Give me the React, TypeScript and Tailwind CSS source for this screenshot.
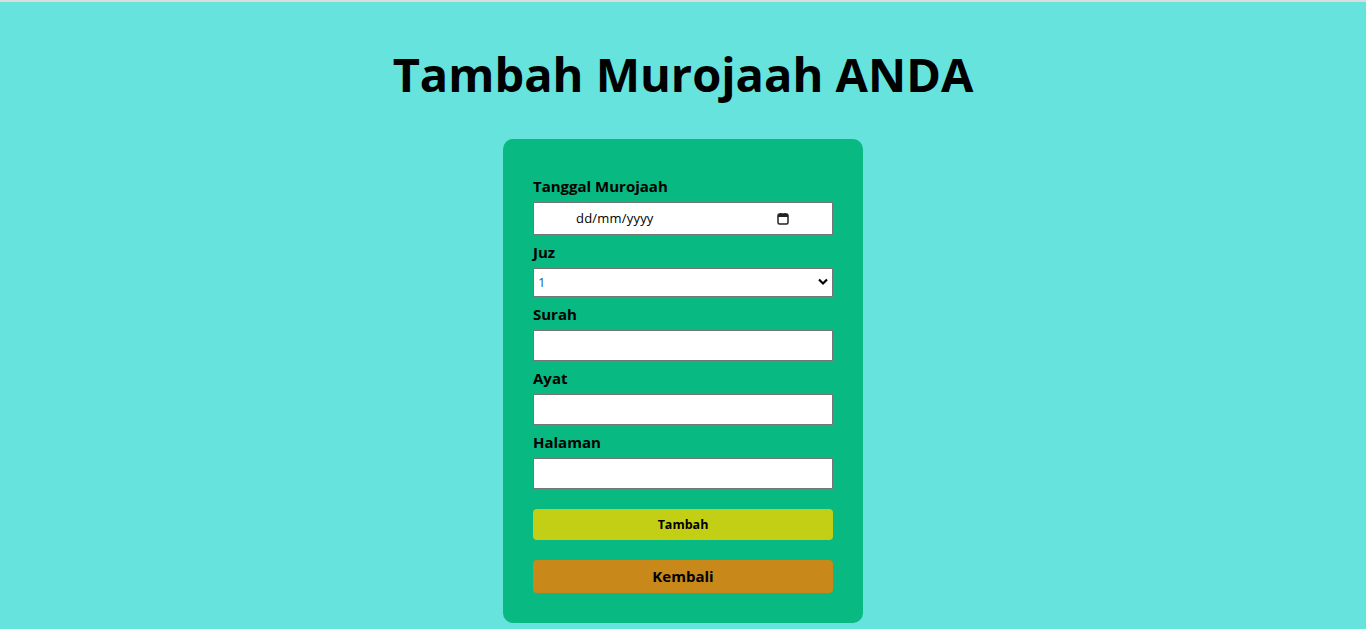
import React from "react";

export default function App() {
  const label = "block text-[15px] font-bold leading-[21px] text-black";
  const input =
    "block w-full border border-[#767676] bg-white text-center text-[13px] text-black outline-none";
  return (
    <div
      className="min-h-[629px] w-full border-t-2 border-[#dcdcdc] bg-[#66e3dd]"
      style={{ fontFamily: '"Open Sans", "Noto Sans", sans-serif' }}
    >
      <h1 className="pt-[37px] text-center text-[47px] font-bold leading-[70px] text-black">
        Tambah Murojaah ANDA
      </h1>
      <div className="mx-auto mt-[30px] w-[360px] rounded-[10px] bg-[#08b981] px-[30px] pt-[37px] pb-[30px]">
        <label className={label}>Tanggal Murojaah</label>
        <div className="mt-[5px] flex h-[33px] w-full items-center border border-[#767676] bg-white pl-[42px] pr-[43px] text-[13px] text-black">
          <span className="tracking-[0.2px]">dd/mm/yyyy</span>
          <svg className="ml-auto" width="12" height="12" viewBox="0 0 12 12">
            <rect x="1" y="1" width="10" height="10" rx="1.5" fill="none" stroke="#222" strokeWidth="1.5" />
            <rect x="1" y="1" width="10" height="3" fill="#222" />
            <rect x="3" y="0" width="1.5" height="2" fill="#222" />
            <rect x="7.5" y="0" width="1.5" height="2" fill="#222" />
          </svg>
        </div>
        <label className={`${label} mt-[7px]`}>Juz</label>
        <div className="relative mt-[5px]">
          <select className="block h-[29px] w-full appearance-none border border-[#767676] bg-white pl-[4px] pr-[20px] text-[13px] text-[#1a5fb4] outline-none">
            <option>1</option>
          </select>
          <svg
            className="pointer-events-none absolute right-[5px] top-[10px]"
            width="10"
            height="8"
            viewBox="0 0 10 8"
          >
            <path d="M1 1.5 L5 5.5 L9 1.5" fill="none" stroke="#000" strokeWidth="2.2" />
          </svg>
        </div>
        <label className={`${label} mt-[7px]`}>Surah</label>
        <input type="text" className={`${input} mt-[5px] h-[31px]`} />
        <label className={`${label} mt-[7px]`}>Ayat</label>
        <input type="text" className={`${input} mt-[5px] h-[31px]`} />
        <label className={`${label} mt-[7px]`}>Halaman</label>
        <input type="text" className={`${input} mt-[5px] h-[31px]`} />
        <button className="mt-[20px] block h-[31px] w-full rounded-[4px] bg-[#c3cf14] pt-[2px] text-[12.5px] font-bold text-black">
          Tambah
        </button>
        <button className="mt-[20px] block h-[33px] w-full rounded-[4px] bg-[#c8881a] text-[15px] font-bold text-black">
          Kembali
        </button>
      </div>
    </div>
  );
}
